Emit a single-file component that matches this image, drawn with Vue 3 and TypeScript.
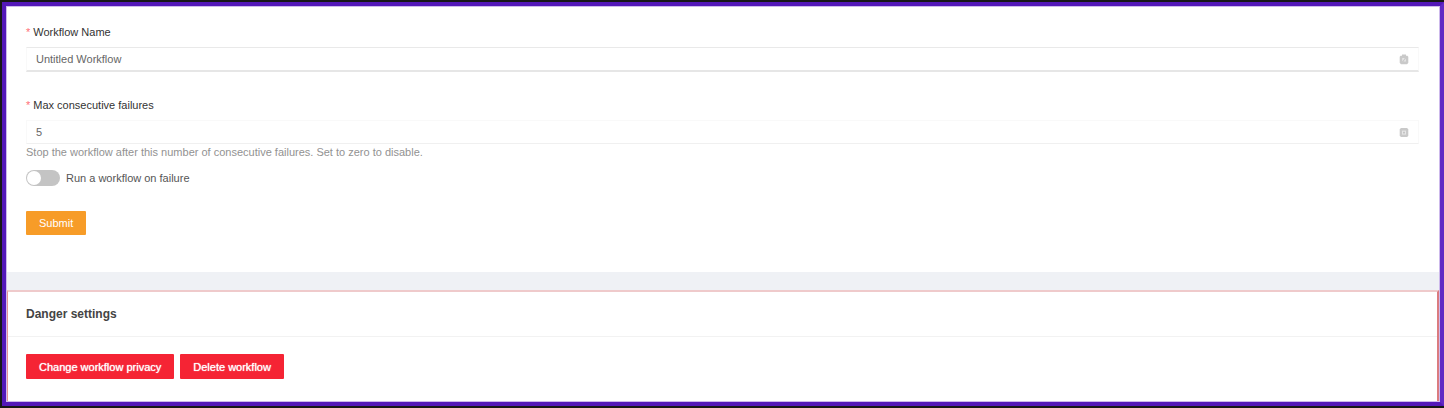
<script setup lang="ts">
import { ref } from 'vue'

const name = ref<string>('Untitled Workflow')
const maxFailures = ref<string>('5')
const runOnFailure = ref<boolean>(false)

function submit(): void {
  name.value = name.value.trim()
}
</script>

<template>
  <div class="frame">
    <main class="page">
      <form class="settings" @submit.prevent="submit">
        <div class="field">
          <label class="label" for="name"><span class="required">*</span>Workflow Name</label>
          <div class="control strong">
            <input id="name" v-model="name" type="text" />
            <button type="button" class="clear" aria-label="Clear name" @click="name = ''">
              <svg viewBox="0 0 10 11" width="10" height="11">
                <path d="M3 .6h4v1.2h1.4l.9 1v6l-1.2 1.5H2L.7 8.8v-6l.9-1H3z" fill="#c9c9c9" />
                <path d="M3.2 4h2.6L3.2 7.6z M6.9 4.4v3H4.6z" fill="#e6e6e6" />
              </svg>
            </button>
          </div>
        </div>
        <div class="field">
          <label class="label" for="max"><span class="required">*</span>Max consecutive failures</label>
          <div class="control">
            <input id="max" v-model="maxFailures" type="text" inputmode="numeric" />
            <button type="button" class="clear" aria-label="Clear failures" @click="maxFailures = ''">
              <svg viewBox="0 0 10 11" width="10" height="11">
                <path d="M2 1h6l1.3 1.2v6.6L8.1 10H2L.7 8.8V2.2z" fill="#c9c9c9" />
                <path d="M3 3.6h4v4H3z" fill="#e6e6e6" />
                <path d="M4.2 4.8h1.6v1.6H4.2z" fill="#bbb" />
              </svg>
            </button>
          </div>
          <p class="help">Stop the workflow after this number of consecutive failures. Set to zero to disable.</p>
        </div>
        <label class="toggle">
          <input v-model="runOnFailure" type="checkbox" role="switch" />
          <span>Run a workflow on failure</span>
        </label>
        <button type="submit" class="button primary">Submit</button>
      </form>
      <section class="danger">
        <h2>Danger settings</h2>
        <div class="actions">
          <button type="button" class="button">Change workflow privacy</button>
          <button type="button" class="button">Delete workflow</button>
        </div>
      </section>
    </main>
  </div>
</template>

<style>
body {
  background: #171717;
}
</style>

<style scoped>
* {
  box-sizing: border-box;
}
.frame {
  padding: 2px 0 2px 2px;
  background: #171717;
  font-family: "Liberation Sans", Arial, sans-serif;
  font-size: 11px;
  line-height: 16px;
  color: #555;
}
.page {
  border: 4px solid #5318b8;
  border-right-color: #6229c4;
  background: #eff1f5;
  box-shadow: inset 1px 1px 0 #cdb9ec, inset -1px -1px 0 #cdb9ec;
  padding: 1px;
}
.settings {
  background: #fff;
  padding: 17px 20px 37px 19px;
}
.field {
  display: flex;
  flex-direction: column;
}
.field + .field {
  margin-top: 25px;
}
.label {
  color: #333;
  margin-bottom: 7px;
}
.required {
  color: #ff7076;
  margin-right: 3px;
}
.control {
  display: flex;
  align-items: center;
  height: 24px;
  padding: 0 9px;
  border: 1px solid #f9f9f9;
  border-bottom: 1px solid #f0f0f0;
}
.control.strong {
  height: 25px;
  border-top-color: #e9e9e9;
  border-bottom: 2px solid #e6e6e6;
}
.control input {
  flex: 1;
  min-width: 0;
  border: 0;
  padding: 0;
  outline: 0;
  background: transparent;
  font: inherit;
  color: #666;
}
.clear {
  display: flex;
  border: 0;
  padding: 0;
  background: none;
}
.help {
  margin: 0;
  color: #929292;
}
.toggle {
  display: flex;
  align-items: center;
  gap: 6px;
  margin-top: 10px;
}
.toggle input {
  appearance: none;
  display: flex;
  width: 34px;
  height: 16px;
  margin: 0;
  padding: 1px;
  border-radius: 8px;
  background: #c4c4c4;
}
.toggle input::before {
  content: "";
  width: 14px;
  height: 14px;
  border-radius: 50%;
  background: #fff;
}
.toggle input:checked {
  justify-content: flex-end;
  background: #f79c28;
}
.button {
  height: 25px;
  padding: 0 13px;
  border: 0;
  border-radius: 1px;
  background: #f52434;
  color: #fff;
  font: inherit;
  text-shadow: 0 0 1px #fff;
}
.primary {
  height: 24px;
  margin-top: 25px;
  background: #f79c28;
  text-shadow: none;
}
.danger {
  margin-top: 18px;
  border: 1px solid #e79296;
  border-top: 2px solid #efcacb;
  border-right: 2px solid #da7b80;
  border-bottom: 0;
  background: #fff;
}
h2 {
  margin: 0;
  padding: 14px 18px;
  border-bottom: 1px solid #f2f2f2;
  font-size: 12px;
  font-weight: 700;
  line-height: 16px;
  color: #444;
}
.actions {
  display: flex;
  gap: 6px;
  padding: 17px 18px 22px;
}
</style>
